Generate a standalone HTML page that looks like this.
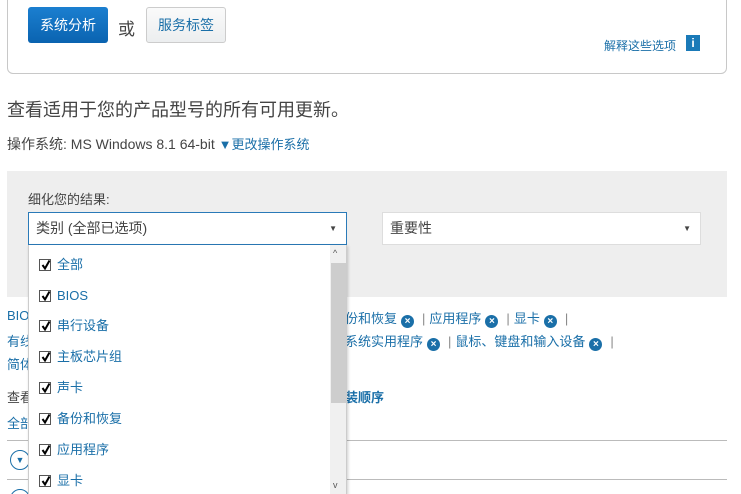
<!DOCTYPE html>
<html><head><meta charset="utf-8"><style>
*{box-sizing:border-box;margin:0;padding:0}
html,body{width:741px;height:494px;overflow:hidden}
body{background:#fff;font-family:"Liberation Sans","Noto Sans CJK SC",sans-serif;color:#444;position:relative}
.a{position:absolute;white-space:nowrap}
.blue{color:#1a6fa8}
.x{display:inline-block;width:13px;height:13px;border-radius:50%;background:#1a6fa8;color:#fff;font-size:10px;line-height:13px;text-align:center;font-weight:bold;vertical-align:-1px;margin:0 4px}
.sep{color:#888;margin:0 4px}
.item{position:absolute;left:39px;font-size:13px;color:#1a6fa8;height:16px;line-height:14px}
.cb{display:inline-block;width:12px;height:12px;border:1px solid #555;background:#fff;vertical-align:-2px;margin-right:6px;position:relative}
.cb svg{position:absolute;left:1px;top:0}
</style></head><body>
<div class="a" style="left:7px;top:-10px;width:720px;height:84px;border:1px solid #c8c8c8;border-radius:6px"></div>
<div class="a" style="left:28px;top:7px;width:80px;height:36px;border-radius:3px;background:linear-gradient(#1b7fd0,#0a63b0);color:#fff;font-size:14px;line-height:36px;text-align:center">系统分析</div>
<div class="a" style="left:118px;top:15px;font-size:17px;color:#444">或</div>
<div class="a" style="left:146px;top:7px;width:80px;height:36px;border-radius:3px;border:1px solid #ccc;background:linear-gradient(#fafafa,#eceeef);color:#1a6fa8;font-size:14px;line-height:34px;text-align:center">服务标签</div>
<div class="a blue" style="left:604px;top:37px;font-size:12px">解释这些选项</div>
<div class="a" style="left:686px;top:35px;width:14px;height:16px;background:#1a7ab8;color:#fff;font-size:12px;font-weight:bold;text-align:center;line-height:16px">i</div>
<div class="a" style="left:7px;top:96px;font-size:18px;color:#444">查看适用于您的产品型号的所有可用更新。</div>
<div class="a" style="left:7px;top:134px;font-size:14px;color:#444">操作系统: MS Windows 8.1 64-bit <span class="blue" style="font-size:13px">▼更改操作系统</span></div>
<div class="a" style="left:7px;top:171px;width:720px;height:126px;background:#eeeeee"></div>
<div class="a" style="left:28px;top:189px;font-size:13px">细化您的结果:</div>
<div class="a" style="left:28px;top:212px;width:319px;height:33px;border:1px solid #2a7ab8;background:#fff;font-size:14px;line-height:31px;padding-left:7px">类别 (全部已选项)<span style="position:absolute;right:9px;top:0;font-size:8px;color:#444">▼</span></div>
<div class="a" style="left:382px;top:212px;width:319px;height:33px;border:1px solid #ddd;background:#fff;font-size:14px;line-height:31px;padding-left:7px">重要性<span style="position:absolute;right:9px;top:0;font-size:8px;color:#444">▼</span></div>

<div class="a blue" style="left:7px;top:308px;font-size:13px">BIOS</div>
<div class="a blue" style="left:345px;top:308px;font-size:13px">份和恢复<span class="x">×</span><span class="sep">|</span>应用程序<span class="x">×</span><span class="sep">|</span>显卡<span class="x">×</span><span class="sep">|</span></div>
<div class="a blue" style="left:7px;top:331px;font-size:13px">有线</div>
<div class="a blue" style="left:345px;top:331px;font-size:13px">系统实用程序<span class="x">×</span><span class="sep">|</span>鼠标、键盘和输入设备<span class="x">×</span><span class="sep">|</span></div>
<div class="a blue" style="left:7px;top:354px;font-size:13px">简体</div>
<div class="a" style="left:7px;top:387px;font-size:13px">查看</div>
<div class="a blue" style="left:345px;top:387px;font-size:13px;font-weight:bold">装顺序</div>
<div class="a blue" style="left:7px;top:413px;font-size:13px">全部</div>
<div class="a" style="left:7px;top:440px;width:720px;height:1px;background:#bbb"></div>
<div class="a" style="left:10px;top:450px;width:20px;height:20px;border:1px solid #1a6fa8;border-radius:50%;color:#1a6fa8;font-size:9px;text-align:center;line-height:19px">▼</div>
<div class="a" style="left:7px;top:479px;width:720px;height:1px;background:#bbb"></div>
<div class="a" style="left:10px;top:489px;width:20px;height:20px;border:1px solid #1a6fa8;border-radius:50%"></div>

<div class="a" style="left:28px;top:245px;width:319px;height:250px;background:#fff;border-left:1px solid #ccc;border-right:1px solid #ccc;box-shadow:1px 1px 3px rgba(0,0,0,.2)"></div>
<div class="a" style="left:330px;top:245px;width:16px;height:249px;background:#f0f0f0"></div>
<div class="a" style="left:331px;top:263px;width:15px;height:140px;background:#cdcdcd"></div>
<div class="a" style="left:333px;top:248px;font-size:9px;color:#555">^</div>
<div class="a" style="left:333px;top:480px;font-size:9px;color:#555">v</div>
<div class="item" style="top:258px"><span class="cb"><svg width="10" height="10"><path d="M1.5 5 L4 8.5 L8.5 0.5" stroke="#000" stroke-width="2" fill="none"/></svg></span>全部</div>
<div class="item" style="top:289px"><span class="cb"><svg width="10" height="10"><path d="M1.5 5 L4 8.5 L8.5 0.5" stroke="#000" stroke-width="2" fill="none"/></svg></span>BIOS</div>
<div class="item" style="top:319px"><span class="cb"><svg width="10" height="10"><path d="M1.5 5 L4 8.5 L8.5 0.5" stroke="#000" stroke-width="2" fill="none"/></svg></span>串行设备</div>
<div class="item" style="top:350px"><span class="cb"><svg width="10" height="10"><path d="M1.5 5 L4 8.5 L8.5 0.5" stroke="#000" stroke-width="2" fill="none"/></svg></span>主板芯片组</div>
<div class="item" style="top:381px"><span class="cb"><svg width="10" height="10"><path d="M1.5 5 L4 8.5 L8.5 0.5" stroke="#000" stroke-width="2" fill="none"/></svg></span>声卡</div>
<div class="item" style="top:412px"><span class="cb"><svg width="10" height="10"><path d="M1.5 5 L4 8.5 L8.5 0.5" stroke="#000" stroke-width="2" fill="none"/></svg></span>备份和恢复</div>
<div class="item" style="top:443px"><span class="cb"><svg width="10" height="10"><path d="M1.5 5 L4 8.5 L8.5 0.5" stroke="#000" stroke-width="2" fill="none"/></svg></span>应用程序</div>
<div class="item" style="top:474px"><span class="cb"><svg width="10" height="10"><path d="M1.5 5 L4 8.5 L8.5 0.5" stroke="#000" stroke-width="2" fill="none"/></svg></span>显卡</div>
</body></html>
